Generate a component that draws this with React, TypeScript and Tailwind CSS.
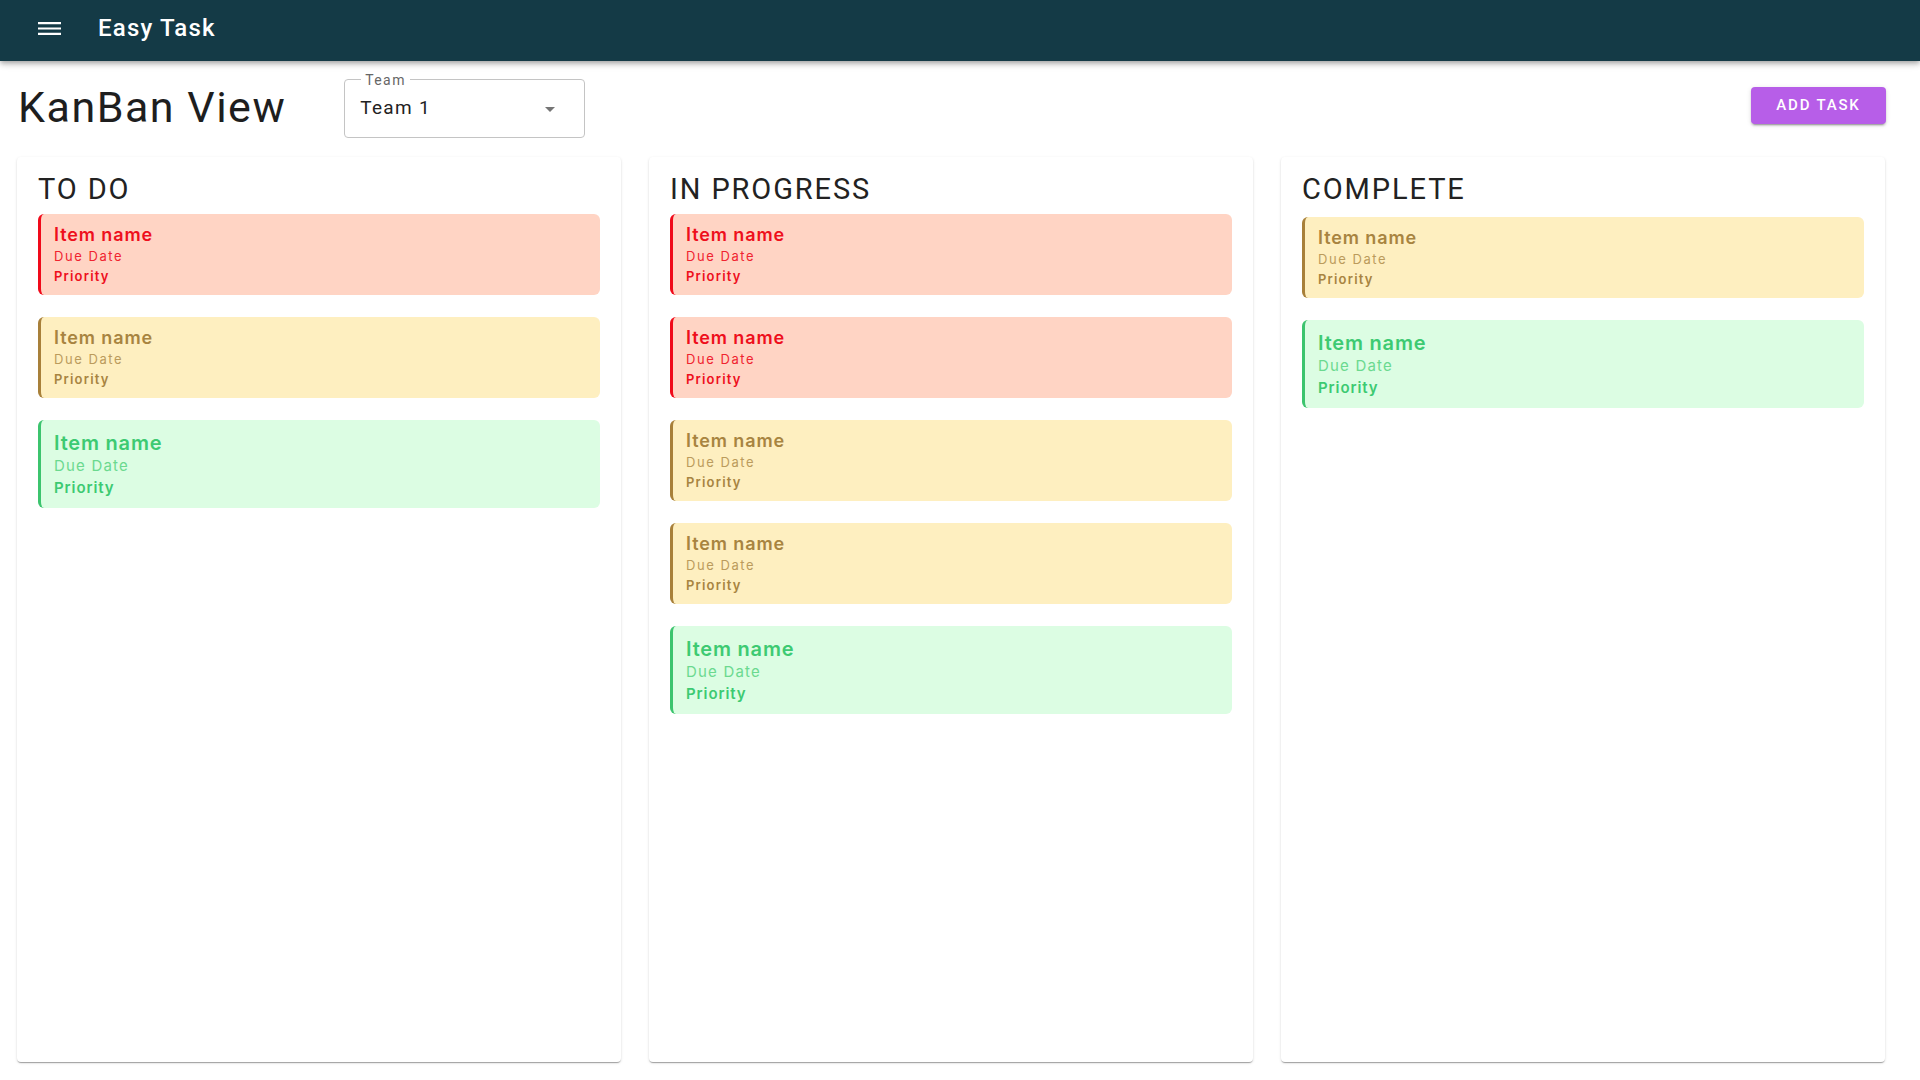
type Level = 'high' | 'medium' | 'low';

interface Task {
  id: number;
  level: Level;
}

const columns: { title: string; tasks: Task[]; offset: string }[] = [
  { title: 'TO DO', offset: '', tasks: [{ id: 1, level: 'high' }, { id: 2, level: 'medium' }, { id: 3, level: 'low' }] },
  {
    title: 'IN PROGRESS',
    offset: '',
    tasks: [
      { id: 4, level: 'high' },
      { id: 5, level: 'high' },
      { id: 6, level: 'medium' },
      { id: 7, level: 'medium' },
      { id: 8, level: 'low' },
    ],
  },
  { title: 'COMPLETE', offset: 'pt-[3px]', tasks: [{ id: 9, level: 'medium' }, { id: 10, level: 'low' }] },
];

// colour sets per priority
const cardStyles: Record<Level, { box: string; name: string; due: string; prio: string }> = {
  high: {
    box: 'bg-[#ffd4c4] border-[#f00a1a] pt-[10px] pb-[9px]',
    name: 'text-[18px] leading-[22px] tracking-[0.05em] text-[#ee0f1c]',
    due: 'text-[13px] leading-[20px] tracking-[0.12em] text-[#f0232f]',
    prio: 'text-[13px] leading-[20px] tracking-[0.09em] text-[#ee0f1c]',
  },
  medium: {
    box: 'bg-[#feefc0] border-[#a8803a] pt-[10px] pb-[9px]',
    name: 'text-[18px] leading-[22px] tracking-[0.05em] text-[#a88440]',
    due: 'text-[13px] leading-[20px] tracking-[0.12em] text-[#bb9b5c]',
    prio: 'text-[13px] leading-[20px] tracking-[0.09em] text-[#a88440]',
  },
  low: {
    box: 'bg-[#dcfde3] border-[#3cc46e] pt-[11px] pb-[10px]',
    name: 'text-[20px] leading-[24px] tracking-[0.04em] text-[#3dca72]',
    due: 'text-[15px] leading-[22px] tracking-[0.08em] text-[#6bd98f]',
    prio: 'text-[15px] leading-[21px] tracking-[0.06em] text-[#3dca72]',
  },
};

function TaskCard({ level }: { level: Level }) {
  const s = cardStyles[level];
  return (
    <div className={`rounded-md border-l-[3px] pl-[13px] pr-3 font-['Inter',sans-serif] ${s.box}`}>
      <div className={`font-semibold ${s.name}`}>Item name</div>
      <div className={s.due}>Due Date</div>
      <div className={`font-semibold ${s.prio}`}>Priority</div>
    </div>
  );
}

function App() {
  return (
    <div className="min-h-screen bg-white font-['Roboto',sans-serif]">
      {/* App bar */}
      <header className="h-[61px] bg-[#143a46] flex items-center shadow-[0_2px_4px_-1px_rgba(0,0,0,0.2),0_4px_5px_0_rgba(0,0,0,0.14),0_1px_10px_0_rgba(0,0,0,0.12)] relative z-10">
        <svg className="ml-[38px] -mt-[4px] w-[23px] h-[13px] text-white" viewBox="3 6 18 12" preserveAspectRatio="none" fill="currentColor">
          <path d="M3 18h18v-2H3v2zm0-5h18v-2H3v2zm0-7v2h18V6H3z" />
        </svg>
        <span className="ml-[37px] -mt-[5px] text-white text-[24px] font-medium tracking-[0.05em]">Easy Task</span>
      </header>

      {/* Title row */}
      <div className="flex items-center h-[96px] pl-[18px] pr-[34px]">
        <h1 className="text-[43px] text-[#1e1e1e] tracking-[0.035em] -mt-[4px]">KanBan View</h1>
        <div className="relative ml-[58px] w-[241px] h-[59px] border border-[#c4c4c4] rounded flex items-center pl-[15px] pr-[22px] -mt-[1px]">
          <span className="absolute -top-[10px] left-[16px] bg-white px-1 text-[14px] tracking-[0.1em] text-[#666]">Team</span>
          <span className="text-[19px] tracking-[0.07em] text-[#222]">Team 1</span>
          <svg className="ml-auto w-6 h-6 text-[#757575]" viewBox="0 0 24 24" fill="currentColor">
            <path d="M7 10l5 5 5-5z" />
          </svg>
        </div>
        <button className="ml-auto h-[37px] w-[135px] rounded bg-[#b75ee8] text-white text-[15px] font-medium uppercase tracking-[0.12em] shadow-[0_3px_1px_-2px_rgba(0,0,0,0.2),0_2px_2px_0_rgba(0,0,0,0.14),0_1px_5px_0_rgba(0,0,0,0.12)] -mt-[7px]">
          Add Task
        </button>
      </div>

      {/* Board */}
      <div className="flex gap-[28px] pl-[17px] pr-[35px] pb-[18px]">
        {columns.map((col) => (
          <div
            key={col.title}
            className="flex-1 h-[905px] rounded bg-white px-[21px] pt-[16px] shadow-[0_2px_1px_-1px_rgba(0,0,0,0.2),0_1px_1px_0_rgba(0,0,0,0.14),0_1px_3px_0_rgba(0,0,0,0.12)]"
          >
            <h2 className="text-[29px] leading-[32px] tracking-[0.065em] text-[#222] mb-[9px]">{col.title}</h2>
            <div className={`flex flex-col gap-[22px] ${col.offset}`}>
              {col.tasks.map((t) => (
                <TaskCard key={t.id} level={t.level} />
              ))}
            </div>
          </div>
        ))}
      </div>
    </div>
  );
}

export default App;
